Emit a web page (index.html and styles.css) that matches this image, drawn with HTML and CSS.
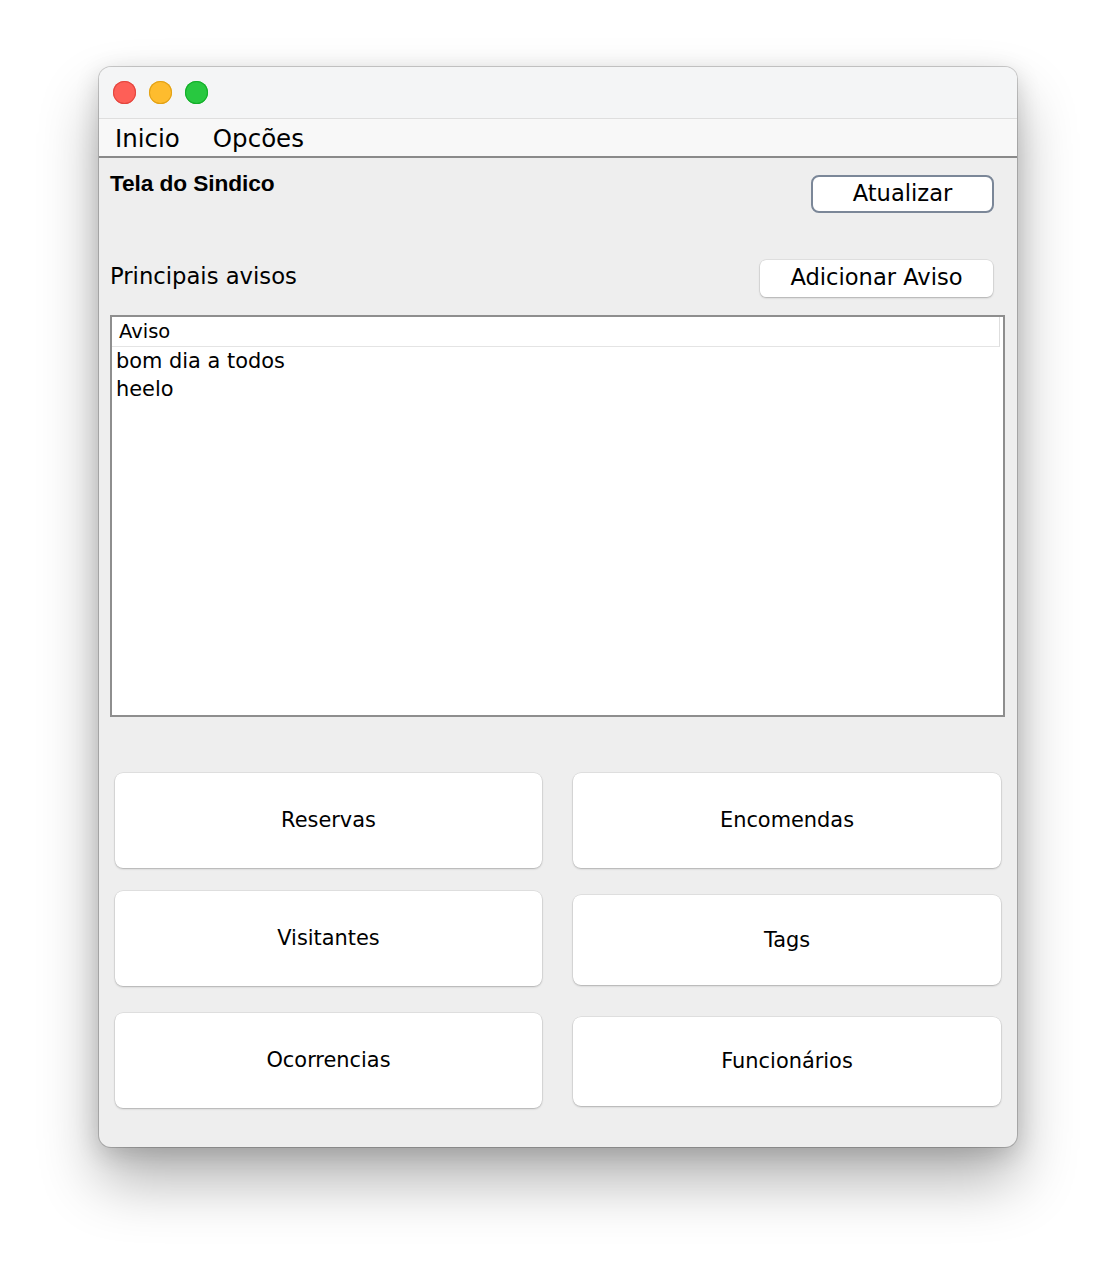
FILE: index.html
```html
<!DOCTYPE html>
<html lang="pt">
<head>
<meta charset="utf-8">
<title>Tela do Sindico</title>
<link rel="stylesheet" href="styles.css">
</head>
<body>
<div class="window">
  <div class="titlebar">
    <span class="light red"></span>
    <span class="light yellow"></span>
    <span class="light green"></span>
  </div>
  <div class="menubar">
    <span class="menu-item">Inicio</span>
    <span class="menu-item">Opcões</span>
  </div>
  <div class="content">
    <div class="row-top">
      <div class="title">Tela do Sindico</div>
      <button class="btn-default">Atualizar</button>
    </div>
    <div class="row-avisos">
      <div class="label">Principais avisos</div>
      <button class="btn-plain">Adicionar Aviso</button>
    </div>
    <div class="table">
      <div class="thead"><span>Aviso</span></div>
      <div class="trow">bom dia a todos</div>
      <div class="trow">heelo</div>
    </div>
    <div class="grid">
      <button class="tile">Reservas</button>
      <button class="tile">Encomendas</button>
      <button class="tile">Visitantes</button>
      <button class="tile inset">Tags</button>
      <button class="tile last">Ocorrencias</button>
      <button class="tile last inset">Funcionários</button>
    </div>
  </div>
</div>
</body>
</html>
```
FILE: styles.css
```css
html, body {
  margin: 0;
  padding: 0;
  background: #ffffff;
}
html {
  min-height: 1280px;
}
body {
  min-height: 1280px;
  box-sizing: border-box;
  padding: 67px 0 0 99px;
  font-family: "DejaVu Sans", sans-serif;
  color: #000;
}
.window {
  width: 918px;
  height: 1080px;
  border-radius: 12px;
  overflow: hidden;
  background: #eeeeee;
  box-shadow: 0 34px 60px rgba(0,0,0,0.30), 0 6px 24px rgba(0,0,0,0.16), 0 0 0 1px rgba(0,0,0,0.18);
  display: flex;
  flex-direction: column;
}
.titlebar {
  height: 51px;
  background: #f4f5f6;
  display: flex;
  align-items: center;
  gap: 13px;
  padding-left: 14px;
  flex-shrink: 0;
}
.light {
  width: 23px;
  height: 23px;
  border-radius: 50%;
  display: block;
}
.red { background: #fe5f57; box-shadow: inset 0 0 0 1px #e2463f; }
.yellow { background: #febc2e; box-shadow: inset 0 0 0 1px #e1a116; }
.green { background: #28c840; box-shadow: inset 0 0 0 1px #14ae2a; }
.menubar {
  height: 37px;
  background: #f8f8f8;
  border-top: 1px solid #dedede;
  border-bottom: 2px solid #8a8a8a;
  display: flex;
  align-items: center;
  padding-left: 16px;
  gap: 33px;
  flex-shrink: 0;
}
.menu-item {
  font-size: 24.5px;
  line-height: 30px;
  padding-top: 2px;
}
.content {
  padding: 0 12px 0 11px;
  display: flex;
  flex-direction: column;
}
.row-top {
  display: flex;
  justify-content: space-between;
  align-items: flex-start;
}
.title {
  font-family: "Liberation Sans", Arial, sans-serif;
  font-weight: bold;
  font-size: 22.7px;
  line-height: 26px;
  margin-top: 12px;
  letter-spacing: -0.1px;
}
button {
  font-family: "DejaVu Sans", sans-serif;
  color: #000;
  cursor: default;
  padding: 0;
}
.btn-default {
  margin-top: 17px;
  margin-right: 11px;
  width: 183px;
  height: 38px;
  padding-bottom: 3px;
  background: #fff;
  border: 2px solid #7b8798;
  border-radius: 8px;
  font-size: 22.6px;
}
.row-avisos {
  display: flex;
  justify-content: space-between;
  align-items: center;
  margin-top: 47px;
}
.label {
  font-size: 22.7px;
  line-height: 26px;
  padding-bottom: 6px;
}
.btn-plain {
  margin-right: 12px;
  width: 233px;
  height: 37px;
  padding-bottom: 4px;
  background: #fff;
  border: none;
  border-radius: 6px;
  box-shadow: 0 1px 2px rgba(0,0,0,0.22), 0 0 0 0.5px rgba(0,0,0,0.1);
  font-size: 22.6px;
}
.table {
  margin-top: 18px;
  height: 398px;
  background: #fff;
  border: 2px solid #8e8e8e;
  display: flex;
  flex-direction: column;
}
.thead {
  box-sizing: border-box;
  height: 30px;
  border-bottom: 1px solid #e4e4e4;
  border-right: 1px solid #dedede;
  margin-right: 3px;
  display: flex;
  align-items: center;
  padding-left: 7px;
  padding-bottom: 1px;
  font-size: 19.5px;
}
.trow {
  height: 28px;
  line-height: 28px;
  padding-left: 4px;
  font-size: 20.9px;
}
.grid {
  margin: 56px 4px 0 5px;
  display: grid;
  grid-template-columns: 427px 428px;
  column-gap: 31px;
  row-gap: 23px;
  align-items: start;
}
.tile {
  height: 95px;
  padding-bottom: 1px;
  background: #fff;
  border: none;
  border-radius: 8px;
  box-shadow: 0 1px 2px rgba(0,0,0,0.22), 0 0 0 0.5px rgba(0,0,0,0.1);
  font-size: 20.9px;
}
.tile.last {
  margin-top: 4px;
}
.tile.inset {
  height: 90px;
  margin-top: 4px;
}
.tile.last.inset {
  margin-top: 8px;
  height: 89px;
}
```
